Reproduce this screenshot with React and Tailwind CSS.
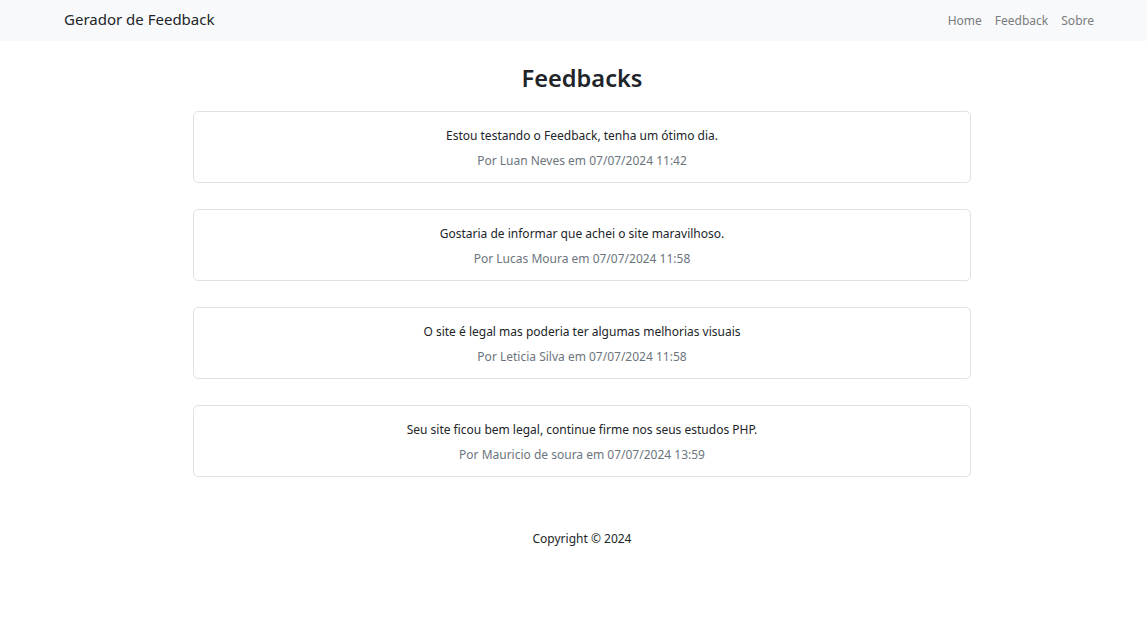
export default function App() {
  const items = [
    { t: "Estou testando o Feedback, tenha um ótimo dia.", a: "Por Luan Neves em 07/07/2024 11:42" },
    { t: "Gostaria de informar que achei o site maravilhoso.", a: "Por Lucas Moura em 07/07/2024 11:58" },
    { t: "O site é legal mas poderia ter algumas melhorias visuais", a: "Por Leticia Silva em 07/07/2024 11:58" },
    { t: "Seu site ficou bem legal, continue firme nos seus estudos PHP.", a: "Por Mauricio de soura em 07/07/2024 13:59" },
  ];
  return (
    <div className="min-h-[628px] bg-white text-[#212529]" style={{ fontFamily: '"Noto Sans", "Open Sans", sans-serif' }}>
      <nav className="h-[41px] bg-[#f8f9fa] flex items-center justify-between pl-[64px] pr-[53px]">
        <span className="text-[15px] text-[#212529] mt-[-2px]">Gerador de Feedback</span>
        <div className="flex text-[12px] text-[#7a7c7e] gap-[13px]">
          <span>Home</span>
          <span>Feedback</span>
          <span>Sobre</span>
        </div>
      </nav>
      <main className="flex flex-col items-center pl-[17px]">
        <h2 className="mt-[22px] text-[23.6px] leading-[30px] font-semibold">Feedbacks</h2>
        <div className="mt-[18px] w-[778px] flex flex-col gap-[26px]">
          {items.map((it, i) => (
            <div key={i} className="border border-[#dfe2e5] rounded-[5px] px-[13px] pt-[14px] pb-[12px] text-center text-[12px] leading-[19px]">
              <p>{it.t}</p>
              <p className="mt-[6px] text-[#6c757d]">{it.a}</p>
            </div>
          ))}
        </div>
        <footer className="mt-[52px] text-[12px] leading-[19px]">Copyright © 2024</footer>
      </main>
    </div>
  );
}
